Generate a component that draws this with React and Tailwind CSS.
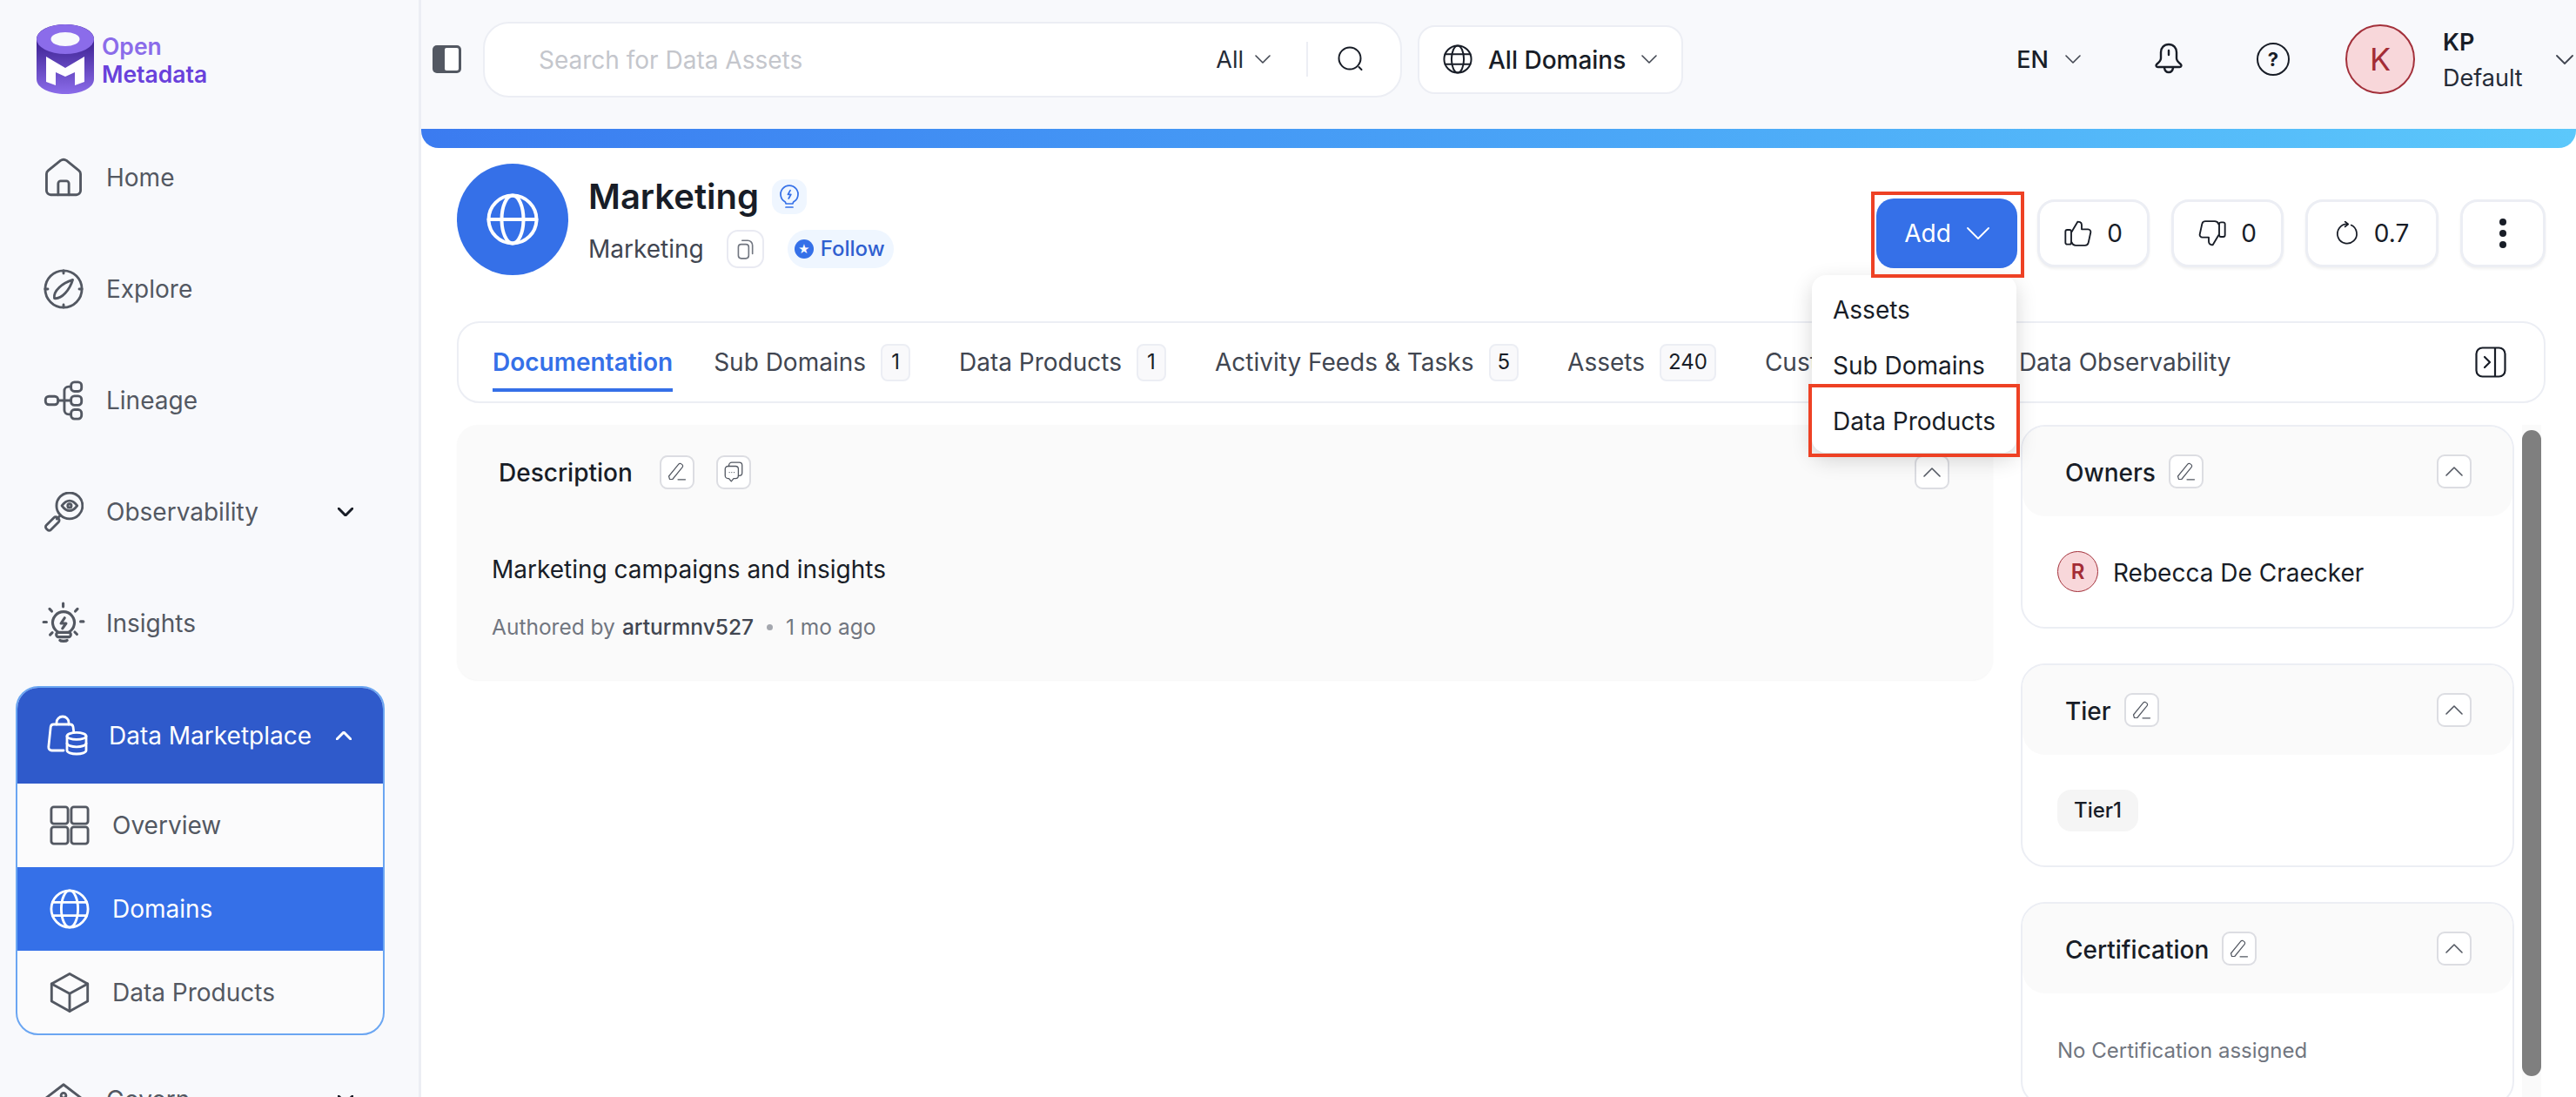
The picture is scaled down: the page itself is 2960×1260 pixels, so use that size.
import React from 'react';

function Icon({ size = 46, sw = 1.5, className = '', children }) {
  return (
    <svg
      width={size}
      height={size}
      viewBox="0 0 24 24"
      fill="none"
      stroke="currentColor"
      strokeWidth={sw}
      strokeLinecap="round"
      strokeLinejoin="round"
      className={`shrink-0 ${className}`}
    >
      {children}
    </svg>
  );
}

function Chevron({ w = 18, h = 10, sw = 2, up = false, className = '' }) {
  return (
    <svg width={w} height={h} viewBox={`0 0 ${w} ${h}`} fill="none" stroke="currentColor" strokeWidth={sw} strokeLinecap="round" strokeLinejoin="round" className={`shrink-0 ${up ? 'rotate-180' : ''} ${className}`}>
      <path d={`M1 1L${w / 2} ${h - 1}L${w - 1} 1`} />
    </svg>
  );
}

const HomeIcon = () => (
  <Icon>
    <path d="M1.800 9.800c0-.8.4-1.500 1-2l7.400-6a3 3 0 0 1 3.600 0l7.400 6c.6.5 1 1.200 1 2v10a2.500 2.500 0 0 1-2.500 2.500H4.300a2.500 2.500 0 0 1-2.500-2.500z" />
    <path d="M8.800 22.300v-6.800a1.500 1.500 0 0 1 1.500-1.500h3.400a1.500 1.500 0 0 1 1.500 1.500v6.800" />
  </Icon>
);

const ExploreIcon = () => (
  <Icon>
    <circle cx="12" cy="12" r="11" />
    <path d="M12 1v1.600M12 21.400V23M1 12h1.600M21.400 12H23" />
    <path d="M6.500 17.500c-.4-2.200.8-4.400 3-6.500s4.600-3.400 8-4.500c-1 3.400-2.400 5.800-4.500 8s-4.300 3.400-6.500 3z" />
  </Icon>
);

const LineageIcon = () => (
  <Icon>
    <rect x="1.200" y="9.500" width="7.500" height="5" rx="2" />
    <rect x="16.500" y="1" width="6.300" height="5.500" rx="2" />
    <rect x="16.500" y="9.300" width="6.300" height="5.500" rx="2" />
    <rect x="16.500" y="17.500" width="6.300" height="5.500" rx="2" />
    <path d="M8.700 12h7.800M16.500 3.700h-1.500a2.500 2.500 0 0 0-2.500 2.500v11.600a2.500 2.500 0 0 0 2.500 2.500h1.500" />
  </Icon>
);

const ObservabilityIcon = () => (
  <Icon>
    <circle cx="15.600" cy="8.300" r="7.800" />
    <path d="M11 8.300c1.500-2 3-3 4.600-3s3.100 1 4.600 3c-1.500 2-3 3-4.600 3s-3.100-1-4.600-3z" />
    <circle cx="15.600" cy="8.300" r="1.100" />
    <path d="M10.200 14l-2.200 2.200" />
    <path d="M1.700 20l4.600-4.600a1.400 1.400 0 0 1 2 0l.7.700a1.400 1.400 0 0 1 0 2L4.400 22.700a1.400 1.400 0 0 1-2 0l-.7-.7a1.400 1.400 0 0 1 0-2z" />
  </Icon>
);

const InsightsIcon = () => (
  <Icon size={50}>
    <path d="M9 16.800a6 6 0 1 1 6 0" />
    <rect x="8" y="17" width="8" height="2.500" rx="1.250" />
    <path d="M10 21.300c.5.600 3.500.600 4 0" />
    <path d="M12.600 9l-2 3h2.800l-2 2.800" />
    <path d="M11.800 1v1.800M4.300 4l1.200 1.300M19.700 4l-1.200 1.300M1 11.300h1.600M21.400 11h1.600M4.600 18.300l1.200-1.200M19.400 18l-1.200-1.200" />
  </Icon>
);

const MarketplaceIcon = () => (
  <Icon size={48} sw={1.400}>
    <path d="M10 20.500H3.200a1.800 1.800 0 0 1-1.800-2l1.200-11.500a1.700 1.700 0 0 1 1.700-1.500h9.500a1.700 1.700 0 0 1 1.700 1.400l.4 3" />
    <path d="M6 5.500V4.500a3.500 3.500 0 0 1 7 0v1" />
    <ellipse cx="17.500" cy="12.200" rx="5.500" ry="2" />
    <path d="M12 12.200v8.300c0 1.100 2.500 2 5.500 2s5.500-.9 5.500-2v-8.300" />
    <path d="M12 16.400c0 1.100 2.500 2 5.500 2s5.500-.9 5.500-2" />
  </Icon>
);

const OverviewIcon = () => (
  <Icon>
    <rect x="1" y="1" width="10" height="10" rx="1.500" />
    <rect x="13" y="1" width="10" height="10" rx="1.500" />
    <rect x="1" y="13" width="10" height="10" rx="1.500" />
    <rect x="13" y="13" width="10" height="10" rx="1.500" />
  </Icon>
);

const GlobeIcon = ({ size = 46, sw = 1.5 }) => (
  <Icon size={size} sw={sw}>
    <circle cx="12" cy="12" r="11" />
    <ellipse cx="12" cy="12" rx="5" ry="11" />
    <path d="M1.800 8h20.400M1.800 16h20.400" />
  </Icon>
);

const CubeIcon = () => (
  <Icon>
    <path d="M12 .8l10.800 6v10.400L12 23.200 1.200 17.200V6.800z" />
    <path d="M1.200 6.800L12 12.600l10.800-5.800M12 12.600v10.600" />
  </Icon>
);

const PencilIcon = ({ size = 24 }) => (
  <Icon size={size} sw={1.200}>
    <path d="M3.500 20.500l-1-3.500L13.800 3.200a2.200 2.200 0 0 1 3.100-.3l.9.700a2.200 2.200 0 0 1 .3 3.100L6.800 20.500z" />
    <path d="M13 20.800h8.500" />
  </Icon>
);

const ThumbIcon = ({ className = '' }) => (
  <Icon size={32} sw={1.400} className={className}>
    <rect x="1" y="9" width="5" height="12.500" rx="1.500" />
    <path d="M6.500 10.500l5-8.500c2 0 3.500 1.200 3.500 3V8.500h5.500a2.300 2.300 0 0 1 2.200 2.800l-1.900 8.700a3 3 0 0 1-3 2.400H10a3.500 3.500 0 0 1-3.500-2.500" />
  </Icon>
);

function SquareButton({ className = '', children }) {
  return (
    <div className={`flex items-center justify-center bg-white border-2 border-[#dcdde2] rounded-[9px] text-[#535862] w-[40px] h-[39px] shrink-0 ${className}`}>
      {children}
    </div>
  );
}

function NavItem({ icon, label, chevron }) {
  return (
    <div className="h-[128px] flex items-center pl-[50px] text-[#535862] text-[28px]">
      <div className="w-[46px] flex justify-center">{icon}</div>
      <span className="ml-[26px]">{label}</span>
      {chevron && <Chevron w={18} h={10} sw={3} className="ml-auto mr-[75px] text-[#181d27]" />}
    </div>
  );
}

function SubItem({ icon, label, active }) {
  return (
    <div className={`h-[96px] flex items-center pl-[37px] text-[28px] ${active ? 'bg-[#3570e8] text-white' : 'text-[#535862]'}`}>
      {icon}
      <span className="ml-[26px]">{label}</span>
    </div>
  );
}

function Sidebar() {
  return (
    <aside className="w-[484px] shrink-0 border-r-[3px] border-[#eceef4]">
      <div className="h-[140px] pl-[42px] pt-[28px] flex items-start">
        <svg width="66" height="80" viewBox="0 0 66 80" className="shrink-0">
          <defs>
            <linearGradient id="logoBody" x1="0" y1="0" x2="0" y2="1">
              <stop offset="0.2" stopColor="#3a1f8f" />
              <stop offset="1" stopColor="#8b6cea" />
            </linearGradient>
          </defs>
          <path d="M0 17C0 7 15 0 33 0s33 7 33 17v46c0 10-15 17-33 17S0 73 0 63z" fill="url(#logoBody)" />
          <ellipse cx="33" cy="17" rx="33" ry="17" fill="#8b6cea" />
          <ellipse cx="33" cy="17" rx="16.500" ry="8" fill="#f8f9fc" />
          <path d="M11 37l22 13 22-13v29l-11 4V55l-11 5-11-5v15l-11-4z" fill="#ffffff" />
        </svg>
        <div className="ml-[9px] mt-[9px] text-[26.500px] leading-[32px] font-semibold">
          <div className="text-[#8b6cea]">Open</div>
          <div className="text-[#6941db]">Metadata</div>
        </div>
      </div>
      <NavItem icon={<HomeIcon />} label="Home" />
      <NavItem icon={<ExploreIcon />} label="Explore" />
      <NavItem icon={<LineageIcon />} label="Lineage" />
      <NavItem icon={<ObservabilityIcon />} label="Observability" chevron />
      <NavItem icon={<InsightsIcon />} label="Insights" />
      <div className="mt-[8px] ml-[18px] w-[424px] h-[401px] rounded-[26px] border-2 border-[#6ba6f2] bg-[#fbfbfc] overflow-hidden">
        <div className="h-[110px] bg-[#2f5acb] text-white flex items-center pl-[33px] text-[28px]">
          <MarketplaceIcon />
          <span className="ml-[24px]">Data Marketplace</span>
          <Chevron w={18} h={10} sw={3} up className="ml-[28px]" />
        </div>
        <SubItem icon={<OverviewIcon />} label="Overview" />
        <SubItem icon={<GlobeIcon />} label="Domains" active />
        <SubItem icon={<CubeIcon />} label="Data Products" />
      </div>
      <div className="mt-[10px]">
        <NavItem
          icon={
            <Icon>
              <path d="M1.500 11L12 3l10.500 8v5.500h-21z" />
              <circle cx="12" cy="9.500" r="1.500" />
            </Icon>
          }
          label="Govern"
          chevron
        />
      </div>
    </aside>
  );
}

function TopBar() {
  return (
    <header className="h-[148px] pb-[12px] flex items-center pl-[13px] pr-[3px]">
      <svg width="33" height="32" viewBox="0 0 33 32" className="shrink-0">
        <rect width="33" height="32" rx="5" fill="#535862" />
        <rect x="14" y="3" width="16" height="26" rx="2" fill="#ffffff" />
      </svg>
      <div className="ml-[25px] w-[1056px] h-[87px] bg-white border-2 border-[#eceef4] rounded-[30px] flex items-center pl-[62px]">
        <span className="mt-[2px] text-[28px] text-[#c4c6cc]">Search for Data Assets</span>
        <span className="ml-auto mt-[2px] text-[27px] text-[#252b37]">All</span>
        <Chevron className="ml-[13px] text-[#414651]" sw={1.600} />
        <div className="ml-[41px] w-[2px] h-[40px] bg-[#eceef4]" />
        <svg width="30" height="30" viewBox="0 0 30 30" fill="none" stroke="#181d27" strokeWidth="2" strokeLinecap="round" className="ml-[34px] mr-[42px] shrink-0">
          <circle cx="14" cy="14" r="12.500" />
          <path d="M24.500 24l3 3" />
        </svg>
      </div>
      <div className="ml-[18px] w-[305px] h-[79px] bg-white border-2 border-[#eceef4] rounded-[20px] flex items-center pl-[27px] text-[#181d27]">
        <GlobeIcon size={34} sw={1.400} />
        <span className="ml-[18px] mt-[2px] text-[28px] font-medium whitespace-nowrap">All Domains</span>
        <Chevron className="ml-[18px] text-[#414651]" sw={1.600} />
      </div>
      <div className="ml-auto flex items-center text-[#181d27]">
        <span className="mt-[2px] text-[27px] font-medium">EN</span>
        <Chevron className="ml-[19px] text-[#414651]" sw={1.600} />
        <svg width="34" height="38" viewBox="0 0 34 38" fill="none" stroke="#181d27" strokeWidth="2.400" strokeLinecap="round" strokeLinejoin="round" className="ml-[84px] shrink-0">
          <path d="M17 2c-5.500 0-9 4-9 9v7c0 2.500-2 4.500-5 7-1 1-.5 3 1.500 3h25c2 0 2.500-2 1.500-3-3-2.500-5-4.500-5-7v-7c0-5-3.500-9-9-9z" />
          <path d="M12 29c.5 3 2.500 5 5 5s4.500-2 5-5M17 9v5" />
        </svg>
        <div className="ml-[84px] w-[38px] h-[38px] rounded-full border-[2.500px] border-[#181d27] flex items-center justify-center text-[22px] font-bold leading-none">?</div>
        <div className="ml-[64px] w-[80px] h-[80px] rounded-full bg-[#f8d7da] border-2 border-[#a3303a] flex items-center justify-center text-[36px] text-[#a32c35]">K</div>
        <div className="ml-[32px] w-[130px] flex flex-col leading-none">
          <span className="mt-[2px] text-[27px] font-semibold mb-[14px]">KP</span>
          <span className="text-[27px] text-[#252b37]">Default</span>
        </div>
        <Chevron w={20} h={11} sw={1.800} className="text-[#414651]" />
      </div>
    </header>
  );
}

function Counter({ width, icon, value }) {
  return (
    <div className={`h-[78px] bg-white border-[3px] border-[#eceef4] rounded-[20px] shadow-[0_2px_3px_rgba(0,0,0,0.06)] flex items-center justify-center text-[#181d27] text-[28px] shrink-0 ${width}`}>
      {icon}
      {value && <span className="ml-[17px]">{value}</span>}
    </div>
  );
}

function AddMenu() {
  return (
    <div className="relative w-[162px] h-[80px] shrink-0">
      <div className="h-full rounded-[20px] bg-[#3570e8] text-white flex items-center justify-center text-[28px]">
        Add
        <Chevron w={26} h={14} sw={1.800} className="ml-[18px]" />
      </div>
      <div className="absolute z-10 left-[-6px] top-[-8px] w-[176px] h-[99px] border-[4px] border-[#ee4124]" />
      <div className="absolute left-[-74px] top-[88px] w-[235px] pt-[8px] pb-[4px] bg-white rounded-[16px] shadow-[0_8px_24px_rgba(0,0,0,0.16)] text-[28px] text-[#181d27]">
        <div className="h-[64px] flex items-center pl-[24px]">Assets</div>
        <div className="h-[64px] flex items-center pl-[24px]">Sub Domains</div>
        <div className="h-[64px] flex items-center pl-[24px] whitespace-nowrap">Data Products</div>
        <div className="absolute left-[-4px] top-[125px] w-[243px] h-[84px] border-[4px] border-[#ee4124]" />
      </div>
    </div>
  );
}

function EntityHeader() {
  return (
    <div className="flex items-start">
      <div className="w-[128px] h-[128px] rounded-full bg-[#3570e8] text-white flex items-center justify-center shrink-0">
        <Icon size={60} sw={1.600}>
          <circle cx="12" cy="12" r="11" />
          <ellipse cx="12" cy="12" rx="5" ry="11" />
          <path d="M1 12h22" />
        </Icon>
      </div>
      <div className="ml-[23px] pt-[18px]">
        <div className="flex items-center h-[40px]">
          <span className="text-[40px] font-semibold text-[#181d27] leading-none">Marketing</span>
          <div className="ml-[15px] w-[40px] h-[40px] rounded-[14px] bg-[#eff6ff] text-[#3570e8] flex items-center justify-center">
            <Icon size={32} sw={1.300}>
              <path d="M8.500 16.500a7.500 7.500 0 1 1 7 0l-.6 1.500H9.100z" />
              <path d="M9 21h6" />
              <path d="M12.800 6.500l-2 3.500h2.600l-2 3.500" />
            </Icon>
          </div>
        </div>
        <div className="flex items-center mt-[18px] h-[44px]">
          <span className="text-[28px] text-[#414651]">Marketing</span>
          <div className="ml-[26px] w-[43px] h-[44px] rounded-[13px] border-2 border-[#e9eaf2] flex items-center justify-center text-[#717680]">
            <Icon size={26} sw={1.500}>
              <rect x="5" y="7" width="11" height="15" rx="3" />
              <path d="M9 3h6a5 5 0 0 1 5 5v9" />
            </Icon>
          </div>
          <div className="ml-[27px] w-[122px] h-[44px] rounded-[22px] bg-[#eff6ff] flex items-center pl-[8px]">
            <div className="w-[22px] h-[22px] rounded-full bg-[#3570e8] flex items-center justify-center text-white text-[13px] leading-none">★</div>
            <span className="ml-[8px] text-[24px] font-medium text-[#2f5fd0]">Follow</span>
          </div>
        </div>
      </div>
      <div className="ml-auto mt-[40px] flex items-center gap-[25px]">
        <div className="flex items-center mr-[-2px]">
          <AddMenu />
        </div>
        <Counter width="w-[129px]" icon={<ThumbIcon />} value="0" />
        <Counter width="w-[129px]" icon={<ThumbIcon className="rotate-180" />} value="0" />
        <Counter
          width="w-[153px]"
          icon={
            <Icon size={28} sw={1.500}>
              <path d="M16 3.900a9.500 9.500 0 1 1-4-.9" />
              <path d="M10 .5l3 2.500-3 2.500" />
            </Icon>
          }
          value="0.7"
        />
        <Counter
          width="w-[98px]"
          icon={
            <svg width="10" height="34" viewBox="0 0 10 34" fill="#181d27">
              <circle cx="5" cy="4" r="4" />
              <circle cx="5" cy="17" r="4" />
              <circle cx="5" cy="30" r="4" />
            </svg>
          }
        />
      </div>
    </div>
  );
}

function Tab({ label, count, className = '' }) {
  return (
    <div className={`flex items-center shrink-0 ${className}`}>
      <span className="text-[28px] text-[#414651] whitespace-nowrap">{label}</span>
      {count && (
        <span className="ml-[17px] h-[43px] min-w-[34px] px-[8px] rounded-[8px] border-2 border-[#eceef4] bg-[#f9f9fb] flex items-center justify-center text-[24px] text-[#181d27]">
          {count}
        </span>
      )}
    </div>
  );
}

function Tabs() {
  return (
    <div className="mt-[53px] h-[94px] border-2 border-[#eceef4] rounded-[26px] flex items-center pl-[39px] pr-[43px] bg-white">
      <div className="relative h-full flex items-center mr-[47px]">
        <span className="text-[28px] font-semibold text-[#3570e8]">Documentation</span>
        <div className="absolute left-0 right-0 top-[75px] h-[4px] bg-[#3570e8]" />
      </div>
      <div className="flex items-center gap-[56px]">
        <Tab label="Sub Domains" count="1" />
        <Tab label="Data Products" count="1" />
        <Tab label="Activity Feeds & Tasks" count="5" />
        <Tab label="Assets" count="240" />
        <Tab label="Custom Properties" className="w-[236px]" />
        <Tab label="Data Observability" />
      </div>
      <svg width="36" height="36" viewBox="0 0 36 36" fill="none" stroke="#181d27" strokeWidth="2.200" strokeLinecap="round" strokeLinejoin="round" className="ml-auto shrink-0">
        <rect x="1.500" y="1.500" width="33" height="33" rx="7" />
        <path d="M23 2v32M11 12l6 6-6 6" />
      </svg>
    </div>
  );
}

function DescriptionCard() {
  return (
    <section className="w-[1765px] h-[293px] shrink-0 bg-[#fafafa] rounded-[24px] shadow-[0_1px_2px_rgba(0,0,0,0.04)]">
      <div className="pt-[32px] pl-[48px] pr-[50px] flex items-center">
        <span className="mt-[2px] text-[28px] font-medium text-[#181d27]">Description</span>
        <SquareButton className="ml-[31px]">
          <PencilIcon />
        </SquareButton>
        <SquareButton className="ml-[25px]">
          <Icon size={26} sw={1.200}>
            <path d="M7 6V5a3 3 0 0 1 3-3h8a3 3 0 0 1 3 3v8a3 3 0 0 1-3 3h-1" />
            <path d="M6 6h8a3 3 0 0 1 3 3v7a3 3 0 0 1-3 3h-2l-2.500 3-2.500-3H6a3 3 0 0 1-3-3V9a3 3 0 0 1 3-3z" />
            <path d="M7.500 12.500h.01M10 12.500h.01M12.500 12.500h.01" />
          </Icon>
        </SquareButton>
        <SquareButton className="ml-auto">
          <Chevron w={20} h={11} sw={1.600} up />
        </SquareButton>
      </div>
      <div className="pl-[40px] mt-[72px] text-[28px] text-[#181d27] leading-[36px]">Marketing campaigns and insights</div>
      <div className="pl-[40px] mt-[32px] flex items-center text-[24.500px] text-[#717680] leading-[32px]">
        Authored by
        <span className="ml-[8px] font-medium text-[#414651]">arturmnv527</span>
        <span className="ml-[15px] w-[7px] h-[7px] rounded-full bg-[#a4a7ae]" />
        <span className="ml-[15px]">1 mo ago</span>
      </div>
    </section>
  );
}

function SideCard({ title, children }) {
  return (
    <section className="w-[567px] h-[234px] shrink-0 border-2 border-[#eceef4] rounded-[28px] bg-white">
      <div className="h-[103px] rounded-[26px] bg-[#fafafa] flex items-center pl-[49px] pr-[47px]">
        <span className="mt-[2px] text-[28px] font-medium text-[#181d27]">{title}</span>
        <SquareButton className="ml-[15px]">
          <PencilIcon />
        </SquareButton>
        <SquareButton className="ml-auto">
          <Chevron w={20} h={11} sw={1.600} up />
        </SquareButton>
      </div>
      <div className="pl-[40px] pt-[40px]">{children}</div>
    </section>
  );
}

export default function App() {
  return (
    <div className="w-[2960px] h-[1260px] overflow-hidden flex bg-[#f8f9fc] font-['Inter',sans-serif]">
      <Sidebar />
      <div className="flex-1 min-w-0 flex flex-col">
        <TopBar />
        <div className="flex-1 min-h-0 bg-white flex flex-col">
          <div className="h-[22px] shrink-0 rounded-b-[20px] bg-linear-to-r from-[#3b7bf0] to-[#5cc8fb]" />
          <main className="flex-1 min-h-0 overflow-hidden pl-[41px] pr-[35px] pt-[18px]">
            <EntityHeader />
            <Tabs />
            <div className="mt-[25px] flex items-start gap-[32px]">
              <DescriptionCard />
              <div className="flex flex-col gap-[40px]">
                <SideCard title="Owners">
                  <div className="flex items-center">
                    <div className="w-[47px] h-[47px] rounded-full bg-[#f8d7da] border border-[#a3303a] flex items-center justify-center text-[24px] font-semibold text-[#a32c35]">R</div>
                    <span className="ml-[17px] mt-[2px] text-[28px] text-[#181d27] whitespace-nowrap">Rebecca De Craecker</span>
                  </div>
                </SideCard>
                <SideCard title="Tier">
                  <div className="w-[93px] h-[48px] rounded-[16px] bg-[#f5f5f5] flex items-center justify-center text-[24px] font-medium text-[#181d27]">Tier1</div>
                </SideCard>
                <SideCard title="Certification">
                  <div className="text-[24px] text-[#717680] leading-[48px] mt-[2px]">No Certification assigned</div>
                </SideCard>
              </div>
              <div className="ml-[-23px] w-[22px] h-[780px] bg-[#fafafa] pt-[6px]">
                <div className="h-[742px] rounded-[11px] bg-[#7f7f7f]" />
              </div>
            </div>
          </main>
        </div>
      </div>
    </div>
  );
}
